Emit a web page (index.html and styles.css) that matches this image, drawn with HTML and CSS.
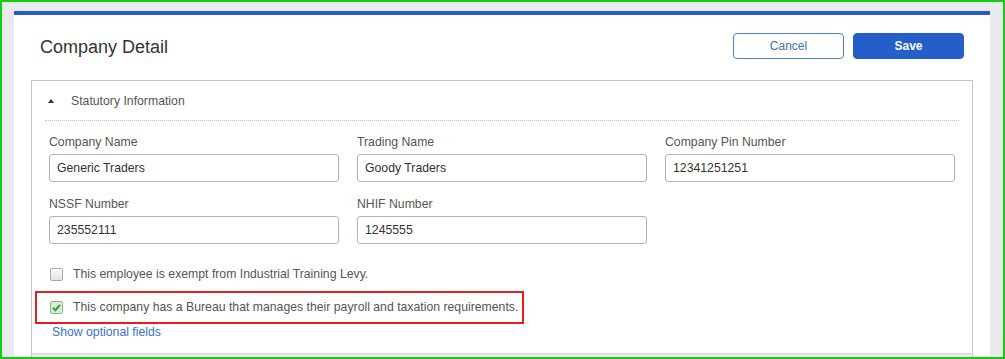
FILE: index.html
```html
<!DOCTYPE html>
<html lang="en">
<head>
    <meta charset="UTF-8">
    <title>Company Detail</title>
    <link rel="stylesheet" href="styles.css">
</head>
<body>
    <div class="frame">
        <div class="panel">
            <div class="panel-head">
                <h1 class="title">Company Detail</h1>
                <div class="actions">
                    <button type="button" class="btn btn-cancel">Cancel</button>
                    <button type="button" class="btn btn-save">Save</button>
                </div>
            </div>

            <div class="section">
                <div class="section-head">
                    <span class="caret"></span>
                    <span>Statutory Information</span>
                </div>
                <div class="section-body">
                    <div class="fields">
                        <div class="field">
                            <label class="label">Company Name</label>
                            <input type="text" class="input" value="Generic Traders">
                        </div>
                        <div class="field">
                            <label class="label">Trading Name</label>
                            <input type="text" class="input" value="Goody Traders">
                        </div>
                        <div class="field">
                            <label class="label">Company Pin Number</label>
                            <input type="text" class="input" value="12341251251">
                        </div>
                        <div class="field">
                            <label class="label">NSSF Number</label>
                            <input type="text" class="input" value="235552111">
                        </div>
                        <div class="field">
                            <label class="label">NHIF Number</label>
                            <input type="text" class="input" value="1245555">
                        </div>
                    </div>

                    <div class="checks">
                        <div class="check-row">
                            <span class="box"></span>
                            <span>This employee is exempt from Industrial Training Levy.</span>
                        </div>
                        <div class="check-row highlight">
                            <span class="box checked">
                                <svg width="11" height="11" viewBox="0 0 11 11"><path d="M2 5.8 L4.4 8.2 L9 2.8" fill="none" stroke="#3d9a3d" stroke-width="2"/></svg>
                            </span>
                            <span>This company has a Bureau that manages their payroll and taxation requirements.</span>
                        </div>
                        <a href="#" class="more-link">Show optional fields</a>
                    </div>
                </div>
                <div class="next-section"></div>
            </div>
        </div>
    </div>
</body>
</html>
```

FILE: styles.css
```css
        body {
            margin: 0;
            font-family: 'Liberation Sans', Arial, sans-serif;
            font-size: 12.25px;
            color: #333;
        }
        .frame {
            height: 359px;
            box-sizing: border-box;
            border: 2px solid #12cc12;
            background: #e9eaeb;
            padding: 9px 13px 0 12px;
            overflow: hidden;
        }
        .panel {
            background: #fff;
            border-top: 4px solid #2a5cc8;
            height: 100%;
            display: flex;
            flex-direction: column;
        }
        .panel-head {
            display: flex;
            align-items: center;
            justify-content: space-between;
            height: 65px;
            padding: 0 26px;
            flex-shrink: 0;
        }
        .title {
            margin: 0;
            font-size: 18px;
            font-weight: normal;
            color: #333;
        }
        .actions {
            display: flex;
            gap: 9px;
            margin-bottom: 4px;
        }
        .btn {
            width: 111px;
            height: 26px;
            border-radius: 4px;
            font-family: inherit;
            font-size: 12px;
            cursor: pointer;
        }
        .btn-cancel {
            background: #fff;
            border: 1px solid #4f80d4;
            color: #3f6dc6;
        }
        .btn-save {
            background: #245fc9;
            border: 1px solid #245fc9;
            color: #fff;
            font-weight: bold;
        }
        .section {
            margin: 0 17px;
            border: 1px solid #c6c6c6;
            border-bottom: none;
            flex: 1;
        }
        .section-head {
            display: flex;
            align-items: center;
            height: 39px;
            margin: 0 13px;
            padding-left: 3px;
            border-bottom: 1px dotted #c4c4c4;
            color: #555;
        }
        .caret {
            width: 0;
            height: 0;
            border-left: 3.5px solid transparent;
            border-right: 3.5px solid transparent;
            border-bottom: 4px solid #333;
            margin-right: 17px;
        }
        .section-body {
            padding: 13px 13px 13px 17px;
        }
        .fields {
            display: grid;
            grid-template-columns: repeat(3, 290px);
            column-gap: 18px;
            row-gap: 14px;
        }
        .label {
            display: block;
            line-height: 16px;
            margin-bottom: 4px;
            color: #555;
        }
        .input {
            display: block;
            width: 100%;
            height: 28px;
            box-sizing: border-box;
            border: 1px solid #b4b4b4;
            border-radius: 3px;
            padding: 0 7px;
            font-family: inherit;
            font-size: 12.25px;
            color: #333;
        }
        .checks {
            margin-top: 20px;
            padding-left: 1px;
        }
        .check-row {
            display: flex;
            align-items: center;
            height: 20px;
            color: #555;
        }
        .box {
            width: 13px;
            height: 13px;
            box-sizing: border-box;
            border: 1px solid #a9a9a9;
            border-radius: 2px;
            background: linear-gradient(#fafafa, #e4e4e4);
            margin-right: 10px;
            display: flex;
            align-items: center;
            justify-content: center;
        }
        .box.checked {
            border-color: #86b886;
            background: #d8ecd6;
        }
        .check-row.highlight {
            width: fit-content;
            margin: 7px 0 0 -15px;
            border: 2px solid #e51d1d;
            padding: 4px 4px 5px 13px;
        }
        .more-link {
            display: block;
            line-height: 16px;
            padding-left: 2px;
            color: #3b6fd6;
            text-decoration: none;
        }
        .next-section {
            border-top: 2px solid #dedede;
        }
```
